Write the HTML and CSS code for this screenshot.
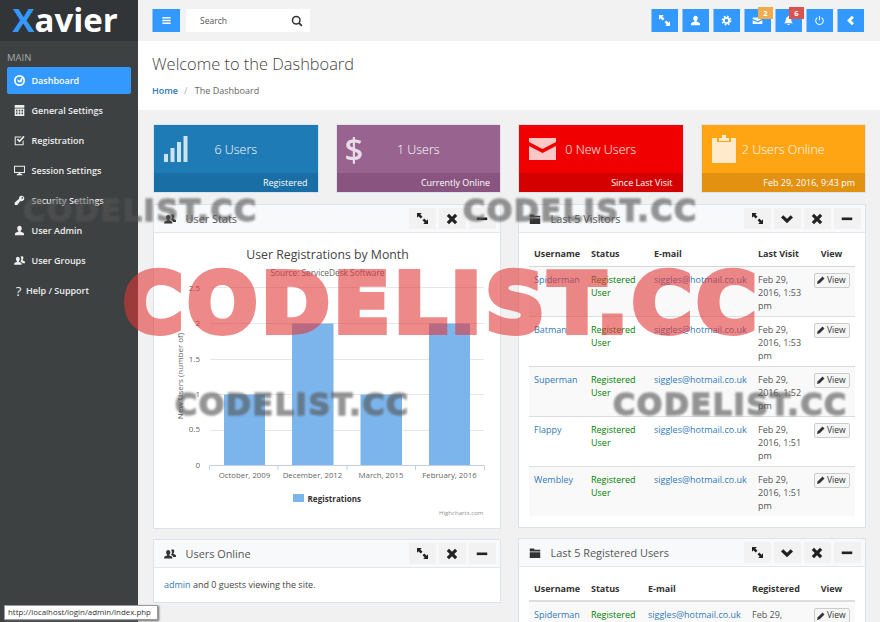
FILE: index.html
```html
<!DOCTYPE html>
<html lang="en">
<head>
<meta charset="utf-8">
<title>Xavier Dashboard</title>
<link rel="stylesheet" href="styles.css">
</head>
<body>
<svg class="sprite" aria-hidden="true">
  <symbol id="i-expand" viewBox="0 0 16 16"><path d="M0 0h7L4.800 2.200 8 5.400 5.400 8 2.200 4.800 0 7zM16 16H9l2.200-2.200L8 10.600 10.600 8l3.200 3.200L16 9z"/></symbol>
  <symbol id="i-user" viewBox="0 0 16 16"><path d="M8 1c2 0 3.300 1.600 3.300 3.800 0 1.600-.7 3-1.700 3.800v1.100c1.600.7 5 1 5 3.300V15H1.400v-2c0-2.300 3.400-2.600 5-3.300V8.600c-1-.8-1.700-2.200-1.700-3.800C4.700 2.600 6 1 8 1z"/></symbol>
  <symbol id="i-cog" viewBox="0 0 16 16"><circle cx="8" cy="8" r="3.900" fill="none" stroke="currentColor" stroke-width="2.600"/><circle cx="8" cy="8" r="6" fill="none" stroke="currentColor" stroke-width="2.400" stroke-dasharray="2.500 2.210"/></symbol>
  <symbol id="i-mail" viewBox="0 0 16 16"><path d="M1 3.500h14v2L8 9 1 5.500zM1 7.500 8 11l7-3.500v5.500H1z"/></symbol>
  <symbol id="i-bell" viewBox="0 0 16 16"><path d="M8 1a1 1 0 0 1 1 1v.6c2 .5 3 2.200 3 4.400 0 3 1 4 3 5H1c2-1 3-2 3-5 0-2.200 1-3.900 3-4.400V2a1 1 0 0 1 1-1zM6.300 13h3.400a1.700 1.700 0 0 1-3.400 0z"/></symbol>
  <symbol id="i-power" viewBox="0 0 16 16"><path d="M8 1.500v6M5 3.800a5.500 5.500 0 1 0 6 0" fill="none" stroke="currentColor" stroke-width="1.500"/></symbol>
  <symbol id="i-back" viewBox="0 0 16 16"><path d="M10 1l3 3-4 4 4 4-3 3-7-7z"/></symbol>
  <symbol id="i-menu" viewBox="0 0 16 16"><path d="M2 3h12v2H2zM2 7h12v2H2zM2 11h12v2H2z"/></symbol>
  <symbol id="i-search" viewBox="0 0 16 16"><circle cx="7" cy="7" r="5" fill="none" stroke="currentColor" stroke-width="2"/><path d="M10.500 10.500 14.500 14.500" stroke="currentColor" stroke-width="2.400"/></symbol>
  <symbol id="i-times" viewBox="0 0 16 16"><path d="M4 1 8 5l4-4 3 3-4 4 4 4-3 3-4-4-4 4-3-3 4-4-4-4z"/></symbol>
  <symbol id="i-minus" viewBox="0 0 16 16"><path d="M1 6h14v3.500H1z"/></symbol>
  <symbol id="i-down" viewBox="0 0 16 16"><path d="M0 6l3-3 5 4.500L13 3l3 3-8 7.500z"/></symbol>
  <symbol id="i-pencil" viewBox="0 0 16 16"><path d="M11 1l4 4-9.500 9.500L0 16l1.500-5.500z"/></symbol>
  <symbol id="i-folder" viewBox="0 0 16 16"><path d="M1 2h5.500l1 1.500H15V6H1zM1 7h14v7.500H1z"/></symbol>
  <symbol id="i-users" viewBox="0 0 16 16"><path d="M5.500 2.500c1.800 0 3 1.500 3 3.300 0 1.400-.6 2.500-1.400 3.200v1c1.500.5 4 .9 4 2.900V14H.2v-1.100c0-2 2.500-2.400 4-2.900V9C3.400 8.300 2.800 7.200 2.800 5.800c0-1.800 1-3.300 2.700-3.300zM11.200 1.500c1.500 0 2.500 1.200 2.500 2.800 0 1.100-.5 2.100-1.100 2.700v1c1.300.4 3.400.7 3.400 2.500V12h-3.800c-.4-1.300-1.600-2.100-2.900-2.600v-.2c.8-.8 1.300-2.100 1.300-3.400 0-1.300-.4-2.500-1.100-3.100.5-.5 1.100-.7 1.700-.7z"/></symbol>
  <symbol id="i-gauge" viewBox="0 0 16 16"><path fill-rule="evenodd" d="M8 0a8 8 0 1 1 0 16A8 8 0 0 1 8 0zm0 2.500a5.500 5.500 0 1 0 0 11 5.500 5.500 0 0 0 0-11zM4.500 6l4 2.500L10.500 3.500l2 1.500-1.500 5.500H6z"/></symbol>
  <symbol id="i-table" viewBox="0 0 16 16"><path fill-rule="evenodd" d="M1 0h14v4H1zM1 5h14v11H1zm2 2v2.500h2V7zm4 0v2.500h2V7zm4 0v2.500h2V7zm-8 4v2.500h2V11zm4 0v2.500h2V11zm4 0v2.500h2V11z"/></symbol>
  <symbol id="i-check" viewBox="0 0 16 16"><path d="M1 2h10L9.500 3.500h-7v10h10V9L14 7.500V15H1z"/><path d="M4 7l2-2 2 2.500L13.500 1 15.500 3 8 11z"/></symbol>
  <symbol id="i-monitor" viewBox="0 0 16 16"><path fill-rule="evenodd" d="M0 1h16v10.500H9.500V13H12v2H4v-2h2.500v-1.500H0zm1.500 1.500v7.500h13V2.500z"/></symbol>
  <symbol id="i-key" viewBox="0 0 16 16"><path fill-rule="evenodd" d="M11 1a4 4 0 1 1-1.500 7.700L7.500 10.700V12.500H5.500V14.500H1V11L7.400 5.600A4 4 0 0 1 11 1zm1 2a1.200 1.200 0 1 0 0 2.400A1.200 1.200 0 0 0 12 3z"/></symbol>
  <symbol id="i-bars" viewBox="0 0 24 26"><path d="M0 18h4v8H0zM6.500 12h4v14h-4zM13 6h4v20h-4zM19.500 0h4v26h-4z"/></symbol>
  <symbol id="i-clip" viewBox="0 0 24 28"><path d="M0 3h5v4h14V3h5v25H0zM7 3h3V0h4v3h3v3H7z"/></symbol>
  <symbol id="i-env" viewBox="0 0 27 22"><path d="M0 0h27v4L13.500 11 0 4zM0 8l13.500 7L27 8v14H0z"/></symbol>
</svg>

<div class="app">
  <aside class="sidebar">
    <div class="logo"><span class="logo-x">X</span>avier</div>
    <div class="menu-label">MAIN</div>
    <nav class="menu">
      <a class="menu-item active"><svg class="mi"><use href="#i-gauge"/></svg>Dashboard</a>
      <a class="menu-item"><svg class="mi"><use href="#i-table"/></svg>General Settings</a>
      <a class="menu-item"><svg class="mi"><use href="#i-check"/></svg>Registration</a>
      <a class="menu-item"><svg class="mi"><use href="#i-monitor"/></svg>Session Settings</a>
      <a class="menu-item"><svg class="mi"><use href="#i-key"/></svg>Security Settings</a>
      <a class="menu-item"><svg class="mi"><use href="#i-user"/></svg>User Admin</a>
      <a class="menu-item"><svg class="mi"><use href="#i-users"/></svg>User Groups</a>
      <a class="menu-item help"><span class="q">?</span>Help / Support</a>
    </nav>
  </aside>

  <div class="main">
    <header class="topbar">
      <button class="tb"><svg class="tbi"><use href="#i-menu"/></svg></button>
      <div class="search"><span>Search</span><svg class="searchi"><use href="#i-search"/></svg></div>
      <div class="tb-right">
        <button class="tb"><svg class="tbi"><use href="#i-expand"/></svg></button>
        <button class="tb"><svg class="tbi"><use href="#i-user"/></svg></button>
        <button class="tb"><svg class="tbi"><use href="#i-cog"/></svg></button>
        <button class="tb"><svg class="tbi"><use href="#i-mail"/></svg><span class="badge orange">2</span></button>
        <button class="tb"><svg class="tbi"><use href="#i-bell"/></svg><span class="badge red">6</span></button>
        <button class="tb"><svg class="tbi"><use href="#i-power"/></svg></button>
        <button class="tb"><svg class="tbi"><use href="#i-back"/></svg></button>
      </div>
    </header>

    <section class="pagehead">
      <h1>Welcome to the Dashboard</h1>
      <div class="crumbs"><a>Home</a><span class="sep">/</span><span>The Dashboard</span></div>
    </section>

    <section class="content">
      <div class="stats">
        <div class="stat blue">
          <div class="stat-top"><svg class="stat-icon bars"><use href="#i-bars"/></svg><span class="stat-text">6 Users</span></div>
          <div class="stat-foot">Registered</div>
        </div>
        <div class="stat purple">
          <div class="stat-top"><span class="dollar">$</span><span class="stat-text">1 Users</span></div>
          <div class="stat-foot">Currently Online</div>
        </div>
        <div class="stat redc">
          <div class="stat-top"><svg class="stat-icon env"><use href="#i-env"/></svg><span class="stat-text">0 New Users</span></div>
          <div class="stat-foot">Since Last Visit</div>
        </div>
        <div class="stat amber">
          <div class="stat-top"><svg class="stat-icon clip"><use href="#i-clip"/></svg><span class="stat-text">2 Users Online</span></div>
          <div class="stat-foot">Feb 29, 2016, 9:43 pm</div>
        </div>
      </div>

      <div class="cols">
        <div class="col">
          <div class="panel chart-panel">
            <div class="panel-head">
              <svg class="ph-icon"><use href="#i-users"/></svg><span class="ph-title">User Stats</span>
              <div class="tools">
                <button class="tool"><svg class="tooli small"><use href="#i-expand"/></svg></button>
                <button class="tool"><svg class="tooli"><use href="#i-times"/></svg></button>
                <button class="tool"><svg class="tooli"><use href="#i-minus"/></svg></button>
              </div>
            </div>
            <svg class="chart" viewBox="154 233 346 294">
              <text class="c-title" x="327.500" y="259" text-anchor="middle">User Registrations by Month</text>
              <text class="c-sub" x="327.500" y="276" text-anchor="middle">Source: ServiceDesk Software</text>
              <g class="c-grid">
                <path d="M210 287.500H484M210 323.500H484M210 359.500H484M210 394.500H484M210 430.500H484"/>
              </g>
              <g class="c-y" text-anchor="end">
                <text x="200" y="291">2.5</text><text x="200" y="326">2</text><text x="200" y="362">1.5</text><text x="200" y="397">1</text><text x="200" y="432">0.5</text><text x="200" y="468">0</text>
              </g>
              <text class="c-y" transform="translate(183 376) rotate(-90)" text-anchor="middle">New Users (number of)</text>
              <g class="c-bars">
                <rect x="224" y="394.500" width="41" height="70.500"/>
                <rect x="292" y="323.500" width="41.500" height="141.500"/>
                <rect x="360.500" y="394.500" width="41.500" height="70.500"/>
                <rect x="429" y="323.500" width="41" height="141.500"/>
              </g>
              <path class="c-axis" d="M209.500 470V465.500H484.500V470M278 465.500V470M347 465.500V470M415.500 465.500V470"/>
              <g class="c-x" text-anchor="middle">
                <text x="244.500" y="478">October, 2009</text><text x="312.500" y="478">December, 2012</text><text x="381" y="478">March, 2015</text><text x="449.500" y="478">February, 2016</text>
              </g>
              <rect class="c-leg" x="293" y="494" width="11" height="8"/>
              <text class="c-legt" x="307.500" y="501.500">Registrations</text>
              <text class="c-credit" x="483.500" y="515" text-anchor="end">Highcharts.com</text>
            </svg>
          </div>
          <div class="panel">
            <div class="panel-head">
              <svg class="ph-icon"><use href="#i-users"/></svg><span class="ph-title">Users Online</span>
              <div class="tools">
                <button class="tool"><svg class="tooli small"><use href="#i-expand"/></svg></button>
                <button class="tool"><svg class="tooli"><use href="#i-times"/></svg></button>
                <button class="tool"><svg class="tooli"><use href="#i-minus"/></svg></button>
              </div>
            </div>
            <div class="online"><a>admin</a> and 0 guests viewing the site.</div>
          </div>
        </div>

        <div class="col">
          <div class="panel">
            <div class="panel-head">
              <svg class="ph-icon"><use href="#i-folder"/></svg><span class="ph-title">Last 5 Visitors</span>
              <div class="tools">
                <button class="tool"><svg class="tooli small"><use href="#i-expand"/></svg></button>
                <button class="tool"><svg class="tooli"><use href="#i-down"/></svg></button>
                <button class="tool"><svg class="tooli"><use href="#i-times"/></svg></button>
                <button class="tool"><svg class="tooli"><use href="#i-minus"/></svg></button>
              </div>
            </div>
            <div class="table-wrap">
              <table class="users visits">
                <colgroup><col class="c1"><col class="c2"><col class="c3"><col class="c4"><col class="c5"></colgroup>
                <thead><tr><th>Username</th><th>Status</th><th>E-mail</th><th>Last Visit</th><th class="ctr">View</th></tr></thead>
                <tbody>
                  <tr><td><a>Spiderman</a></td><td class="ok">Registered User</td><td><a>siggles@hotmail.co.uk</a></td><td>Feb 29, 2016, 1:53 pm</td><td class="ctr"><button class="view"><svg class="pen"><use href="#i-pencil"/></svg>View</button></td></tr>
                  <tr><td><a>Batman</a></td><td class="ok">Registered User</td><td><a>siggles@hotmail.co.uk</a></td><td>Feb 29, 2016, 1:53 pm</td><td class="ctr"><button class="view"><svg class="pen"><use href="#i-pencil"/></svg>View</button></td></tr>
                  <tr><td><a>Superman</a></td><td class="ok">Registered User</td><td><a>siggles@hotmail.co.uk</a></td><td>Feb 29, 2016, 1:52 pm</td><td class="ctr"><button class="view"><svg class="pen"><use href="#i-pencil"/></svg>View</button></td></tr>
                  <tr><td><a>Flappy</a></td><td class="ok">Registered User</td><td><a>siggles@hotmail.co.uk</a></td><td>Feb 29, 2016, 1:51 pm</td><td class="ctr"><button class="view"><svg class="pen"><use href="#i-pencil"/></svg>View</button></td></tr>
                  <tr><td><a>Wembley</a></td><td class="ok">Registered User</td><td><a>siggles@hotmail.co.uk</a></td><td>Feb 29, 2016, 1:51 pm</td><td class="ctr"><button class="view"><svg class="pen"><use href="#i-pencil"/></svg>View</button></td></tr>
                </tbody>
              </table>
            </div>
          </div>
          <div class="panel">
            <div class="panel-head">
              <svg class="ph-icon"><use href="#i-folder"/></svg><span class="ph-title">Last 5 Registered Users</span>
              <div class="tools">
                <button class="tool"><svg class="tooli small"><use href="#i-expand"/></svg></button>
                <button class="tool"><svg class="tooli"><use href="#i-down"/></svg></button>
                <button class="tool"><svg class="tooli"><use href="#i-times"/></svg></button>
                <button class="tool"><svg class="tooli"><use href="#i-minus"/></svg></button>
              </div>
            </div>
            <div class="table-wrap regs-wrap">
              <table class="users regs">
                <colgroup><col class="c1"><col class="c2"><col class="c3"><col class="c4"><col class="c5"></colgroup>
                <thead><tr><th>Username</th><th>Status</th><th>E-mail</th><th>Registered</th><th class="ctr">View</th></tr></thead>
                <tbody>
                  <tr><td><a>Spiderman</a></td><td class="ok">Registered User</td><td><a>siggles@hotmail.co.uk</a></td><td>Feb 29, 2016, 1:53 pm</td><td class="ctr"><button class="view"><svg class="pen"><use href="#i-pencil"/></svg>View</button></td></tr>
                </tbody>
              </table>
            </div>
          </div>
        </div>
      </div>
    </section>
  </div>
</div>

<div class="status-tip">http://localhost/login/admin/index.php</div>
<div class="wm wm-red">CODELIST.CC</div>
<div class="wm wm-grey g1">CODELIST.CC</div>
<div class="wm wm-grey g2">CODELIST.CC</div>
<div class="wm wm-grey g3">CODELIST.CC</div>
<div class="wm wm-grey g4">CODELIST.CC</div>
</body>
</html>
```
FILE: styles.css
```css
* { box-sizing: border-box; }
html, body { margin: 0; height: 622px; overflow: hidden; }
body { position: relative; font-family: "Open Sans", sans-serif; font-size: 9px; color: #555; background: #f1f1f1; }
a { color: #337ab7; text-decoration: none; }
button { font-family: inherit; cursor: pointer; }
.sprite { display: none; }
svg { fill: currentColor; }

.app { display: flex; height: 622px; overflow: hidden; }
.sidebar { width: 138px; flex: none; background: #3d4142; color: #eee; }
.logo { height: 41px; background: #313537; padding-left: 12.500px; font: 700 33px/40px "Open Sans", sans-serif; color: #fff; }
.logo-x { color: #3399ff; }
.menu-label { color: #a5a9aa; font-size: 9.500px; line-height: 13px; padding: 10px 7px 3px; }
.menu { display: flex; flex-direction: column; padding: 0 7px; gap: 3px; }
.menu-item { display: flex; align-items: center; height: 27px; padding-left: 7px; border-radius: 2px; color: #eee; font-weight: 600; font-size: 9px; }
.menu-item.active { background: #3399ff; color: #fff; }
.mi { width: 11px; height: 11px; margin-right: 6.500px; flex: none; }
.q { width: 9px; margin-right: 3px; font-size: 13px; font-weight: 400; text-align: center; }

.main { flex: 1; min-width: 0; }
.topbar { display: flex; align-items: center; height: 41px; padding: 0 16px 0 14px; background: #f2f2f2; gap: 6.500px; }
.tb { position: relative; display: flex; align-items: center; justify-content: center; width: 27.500px; height: 23px; padding: 0; border: 0; border-left: 1px solid #8cc4fb; background: #3399ff; color: #fff; }
.tbi { width: 11px; height: 11px; }
.search { display: flex; align-items: center; justify-content: space-between; width: 124px; height: 23px; padding: 0 7px 0 14px; background: #fff; color: #555; font-size: 8.500px; }
.searchi { width: 12px; height: 12px; color: #333; }
.tb-right { display: flex; gap: 3.500px; margin-left: auto; }
.badge { position: absolute; top: -2px; right: -2px; width: 15px; height: 12px; color: #fff; font-weight: 700; font-size: 7.500px; line-height: 12px; text-align: center; }
.badge.orange { background: #f0ad4e; }
.badge.red { background: #d9534f; }

.pagehead { height: 69px; padding: 13px 14px 0; background: #fff; }
.pagehead h1 { margin: 0; font-size: 16.400px; font-weight: 300; line-height: 20px; color: #444; }
.crumbs { display: flex; margin-top: 10px; font-size: 9px; line-height: 13px; color: #666; }
.crumbs a { font-weight: 600; }
.sep { margin: 0 7.500px 0 6px; color: #aaa; }

.content { padding: 14px 14px 0 15px; }
.stats { display: grid; grid-template-columns: repeat(4, 1fr); gap: 17px; }
.stat { height: 69px; border: 1px solid #dde3ea; color: #fff; }
.stat-top { display: grid; grid-template-columns: 1fr auto 1fr; align-items: center; height: 48px; }
.stat-top > :first-child { margin-left: 10px; }
.stat-top > .dollar { margin-left: 8px; }
.stat-text { font-size: 12.500px; font-weight: 300; }
.stat-foot { height: 19px; padding-right: 10px; font-size: 9px; line-height: 19px; text-align: right; }
.stat-icon { opacity: .78; }
.bars { width: 24px; height: 26px; }
.env { width: 27px; height: 22px; }
.clip { width: 24px; height: 28px; }
.dollar { font-size: 33px; font-weight: 600; line-height: 1; opacity: .78; }
.blue { background: #1f7bb6; }
.blue .stat-foot { background: #1a6ea6; }
.purple { background: #99638f; }
.purple .stat-foot { background: #895580; }
.redc { background: #f00000; }
.redc .stat-foot { background: #d40000; }
.amber { background: #ffa412; }
.amber .stat-foot { background: #e29110; }

.cols { display: grid; grid-template-columns: 1fr 1fr; gap: 17px; margin-top: 11px; }
.col { display: flex; flex-direction: column; gap: 10px; }
.panel { background: #fff; border: 1px solid #dde3ea; }
.chart-panel { height: 325px; }
.panel-head { display: flex; align-items: center; height: 28px; padding: 0 4px 0 10px; background: #f8f9fb; border-bottom: 1px solid #e4e8ee; }
.ph-icon { width: 12px; height: 12px; color: #333; margin-right: 9.500px; }
.ph-title { font-size: 10.900px; color: #555; }
.tools { display: flex; gap: 2.500px; margin-left: auto; }
.tool { display: flex; align-items: center; justify-content: center; width: 27.500px; height: 21px; padding: 0; border: 0; background: #f2f2f2; color: #222; }
.tooli { width: 12px; height: 12px; }
.tooli.small { width: 11px; height: 11px; }

.chart { display: block; width: 346px; height: 294px; }
.chart text { font-family: "Open Sans", sans-serif; }
.c-title { font-size: 12.300px; fill: #444; }
.c-sub { font-size: 8.300px; fill: #666; }
.c-grid { fill: none; stroke: #e6e6e6; }
.c-y, .c-y text { font-size: 8px; fill: #666; }
.c-bars { fill: #7cb5ec; }
.c-axis { fill: none; stroke: #c0d0e0; }
.c-x text { font-size: 7.800px; fill: #666; }
.c-leg { fill: #7cb5ec; }
.c-legt { font-size: 8.100px; font-weight: 700; fill: #333; }
.c-credit { font-size: 6.100px; fill: #909090; }

.online { height: 34px; padding: 0 10px; font-size: 9px; line-height: 34px; color: #444; }

.table-wrap { padding: 8px 10px 11px; }
.regs-wrap { padding-top: 11px; }
.users { width: 100%; table-layout: fixed; border-collapse: collapse; font-size: 9px; line-height: 13.300px; color: #555; }
.users th { height: 25px; padding: 0 5px; font-weight: 700; text-align: left; color: #333; vertical-align: middle; }
.regs th { height: 23px; }
.users thead tr { border-bottom: 1px solid #d5d5d5; }
.regs thead tr { border-bottom: 2px solid #ddd; }
.users td { height: 50px; padding: 6px 5px 0; vertical-align: top; }
.users tbody tr + tr { border-top: 1px solid #ddd; }
.users tbody tr:nth-child(odd) { background: #f9f9f9; }
.users .ctr { text-align: center; }
.ok { color: #008000; }
.visits .c1 { width: 57px; } .visits .c2 { width: 63px; } .visits .c3 { width: 104px; } .visits .c4 { width: 55px; } .visits .c5 { width: 47px; }
.regs .c1 { width: 57px; } .regs .c2 { width: 57px; } .regs .c3 { width: 104px; } .regs .c4 { width: 61px; } .regs .c5 { width: 47px; }
.view { display: inline-flex; align-items: center; justify-content: center; width: 36px; height: 15px; padding: 0; border: 1px solid #ccc; border-radius: 2px; background: #f6f6f6; color: #333; font-size: 8.500px; line-height: 1; }
.pen { width: 8px; height: 8px; margin-right: 1.500px; }

.status-tip { position: absolute; left: 4px; top: 605px; width: 154px; height: 15px; padding-left: 3px; background: #fff; border: 1px solid #999; box-shadow: 1px 1px 2px #666; font: 7.900px/13px "Open Sans", sans-serif; color: #333; }

.wm { position: absolute; font-family: "DejaVu Sans", sans-serif; font-weight: 700; white-space: nowrap; pointer-events: none; line-height: 1; }
.wm-red { left: 123px; top: 263px; font-size: 82px; letter-spacing: 4.300px; color: #e23535; -webkit-text-stroke: 6px #e23535; opacity: .58; }
.wm-grey { font-size: 30px; letter-spacing: 1.700px; color: #555; -webkit-text-stroke: 1.500px #555; opacity: .62; filter: blur(1px); }
.g1 { left: 23px; top: 196px; }
.g2 { left: 463px; top: 196px; }
.g3 { left: 175px; top: 390px; }
.g4 { left: 613px; top: 390px; }
```
